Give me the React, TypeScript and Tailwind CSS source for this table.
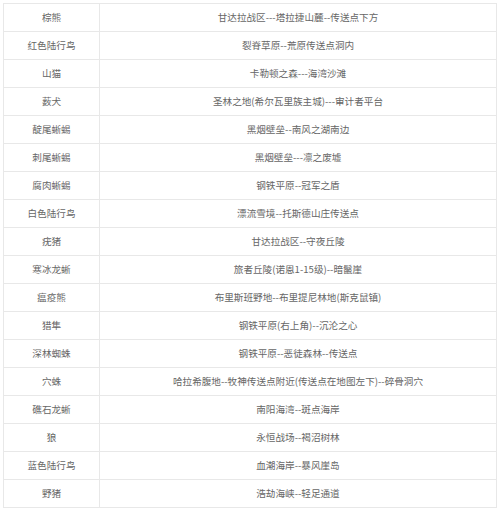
const rows: [string, string][] = [
  ["棕熊", "甘达拉战区---塔拉捷山麓--传送点下方"],
  ["红色陆行鸟", "裂脊草原--荒原传送点洞内"],
  ["山猫", "卡勒顿之森---海湾沙滩"],
  ["薮犬", "圣林之地(希尔瓦里族主城)---审计者平台"],
  ["靛尾蜥蜴", "黑烟壁垒--南风之湖南边"],
  ["刺尾蜥蜴", "黑烟壁垒---凛之废墟"],
  ["腐肉蜥蜴", "钢铁平原--冠军之盾"],
  ["白色陆行鸟", "漂流雪境--托斯德山庄传送点"],
  ["疣猪", "甘达拉战区--守夜丘陵"],
  ["寒冰龙蜥", "旅者丘陵(诺恩1-15级)--暗鬣崖"],
  ["瘟疫熊", "布里斯班野地--布里提尼林地(斯克鼠镇)"],
  ["猎隼", "钢铁平原(右上角)--沉沦之心"],
  ["深林蜘蛛", "钢铁平原--恶徒森林--传送点"],
  ["穴蛛", "哈拉希腹地--牧神传送点附近(传送点在地图左下)--碎骨洞穴"],
  ["礁石龙蜥", "南阳海湾--斑点海岸"],
  ["狼", "永恒战场--褐沼树林"],
  ["蓝色陆行鸟", "血潮海岸--暴风崖岛"],
  ["野猪", "浩劫海峡--轻足通道"],
];

export default function App() {
  return (
    <div className="w-[500px] h-[510px] bg-white pt-[3px] pl-[3px] overflow-hidden">
      <div
        className="w-[494px] border-t border-l border-[#e8e8e8] text-[9.6px] text-[#666]"
        style={{ fontFamily: '"Noto Sans CJK SC", "Noto Sans", sans-serif' }}
      >
        {rows.map(([animal, place]) => (
          <div key={animal} className="grid grid-cols-[96px_1fr] h-[28px] border-b border-[#e8e8e8]">
            <div className="flex items-center justify-center border-r border-[#e8e8e8]">{animal}</div>
            <div className="flex items-center justify-center border-r border-[#e8e8e8]">{place}</div>
          </div>
        ))}
      </div>
    </div>
  );
}
